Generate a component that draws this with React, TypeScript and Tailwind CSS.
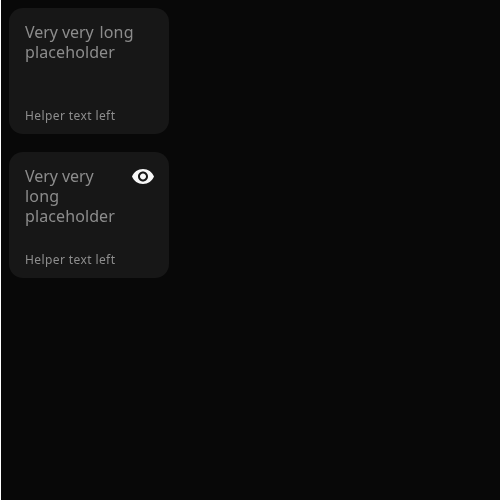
import React from 'react';

type FieldProps = { icon?: boolean };

function EyeIcon() {
  return (
    <svg viewBox="0 0 24 24" className="mt-px size-6 shrink-0" fill="#f8f8f8" aria-hidden="true">
      <path d="M12 4C7 4 2.73 7.11 1 11.5 2.73 15.89 7 19 12 19s9.27-3.11 11-7.5C21.27 7.11 17 4 12 4zm0 12.5c-2.76 0-5-2.24-5-5s2.24-5 5-5 5 2.24 5 5-2.24 5-5 5zm0-8c-1.66 0-3 1.34-3 3s1.34 3 3 3 3-1.34 3-3-1.34-3-3-3z" />
    </svg>
  );
}

function TextAreaField({ icon }: FieldProps) {
  return (
    <div className="flex h-[126px] w-40 flex-col justify-between rounded-[14px] bg-[#171717] pb-2.5 pl-4">
      <div className="flex justify-between pt-3 pr-3.5">
        <div className="w-[114px] shrink pt-0.5 text-[16px] leading-5 text-[#8c8c8c] will-change-transform">
          <span className="block tracking-[-0.05px] whitespace-nowrap">
            Very very{!icon && <span className="pl-[1.5px] tracking-[0.15px]"> long</span>}
          </span>
          {icon && <span className="block tracking-[0.2px]">long</span>}
          <span className="block tracking-[0.1px]">placeholder</span>
        </div>
        {icon && <EyeIcon />}
      </div>
      <div className="text-[12px] leading-4 tracking-[0.4px] text-[#8e8e8e] will-change-transform">Helper text left</div>
    </div>
  );
}

export default function App() {
  return (
    <main className="flex h-screen flex-col gap-[18px] overflow-hidden border-l border-white bg-[#080808] px-2 pt-2 font-['Noto_Sans',sans-serif]">
      <TextAreaField />
      <TextAreaField icon />
    </main>
  );
}
